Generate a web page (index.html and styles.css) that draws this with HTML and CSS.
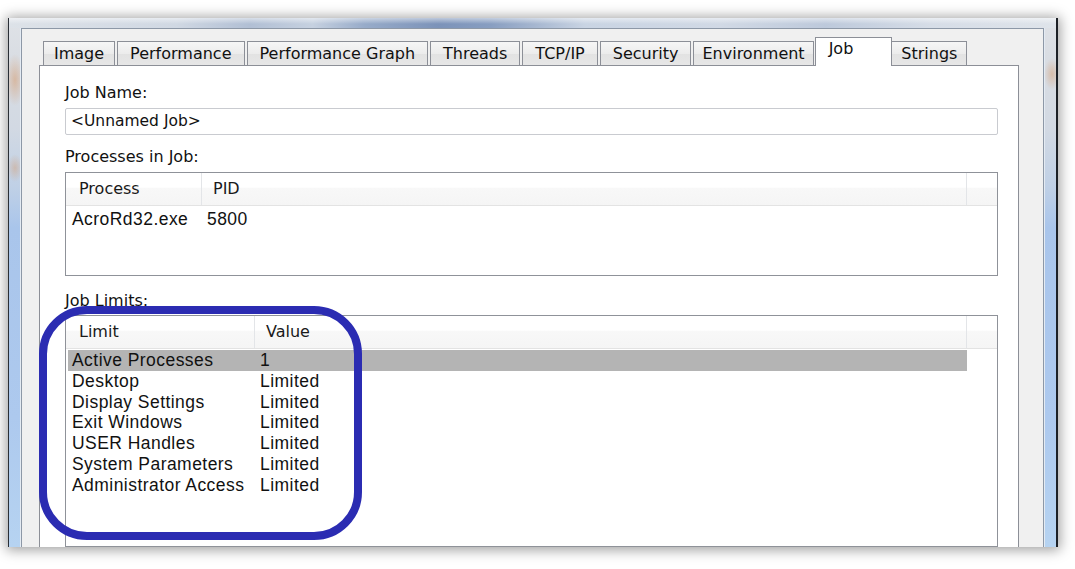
FILE: index.html
```html
<!DOCTYPE html>
<html>
<head>
<meta charset="utf-8">
<link rel="stylesheet" href="styles.css">
</head>
<body>
<div class="stage">
  <div class="window">
    <div class="topstrip"></div>
    <div class="dialog">
      <div class="tabs">
        <div class="tab">Image</div>
        <div class="tab">Performance</div>
        <div class="tab">Performance Graph</div>
        <div class="tab">Threads</div>
        <div class="tab">TCP/IP</div>
        <div class="tab">Security</div>
        <div class="tab tight">Environment</div>
        <div class="tab active">Job</div>
        <div class="tab">Strings</div>
      </div>
      <div class="panel">
        <div class="label first">Job Name:</div>
        <div class="textbox">&lt;Unnamed Job&gt;</div>
        <div class="label">Processes in Job:</div>
        <div class="listview procs">
          <div class="header">
            <div class="hcell c1">Process</div>
            <div class="hcell c2">PID</div>
            <div class="hcell filler"></div>
          </div>
          <div class="rows">
            <div class="row"><span class="cell c1">AcroRd32.exe</span><span class="cell c2">5800</span></div>
          </div>
        </div>
        <div class="label limits-label">Job Limits:</div>
        <div class="listview limits">
          <div class="header">
            <div class="hcell c1">Limit</div>
            <div class="hcell c2">Value</div>
            <div class="hcell filler"></div>
          </div>
          <div class="rows">
            <div class="row selected"><span class="cell c1">Active Processes</span><span class="cell c2">1</span></div>
            <div class="row"><span class="cell c1">Desktop</span><span class="cell c2">Limited</span></div>
            <div class="row"><span class="cell c1">Display Settings</span><span class="cell c2">Limited</span></div>
            <div class="row"><span class="cell c1">Exit Windows</span><span class="cell c2">Limited</span></div>
            <div class="row"><span class="cell c1">USER Handles</span><span class="cell c2">Limited</span></div>
            <div class="row"><span class="cell c1">System Parameters</span><span class="cell c2">Limited</span></div>
            <div class="row"><span class="cell c1">Administrator Access</span><span class="cell c2">Limited</span></div>
          </div>
        </div>
      </div>
    </div>
  </div>
  <div class="annot"></div>
</div>
</body>
</html>
```

FILE: styles.css
```css
* { box-sizing: border-box; }
html, body { margin: 0; padding: 0; background: #ffffff; }
.stage {
  position: relative;
  width: 1075px;
  height: 569px;
  overflow: hidden;
  padding: 18px 0 0 8px;
  background: #ffffff;
}
.window {
  width: 1050px;
  height: 529px;
  display: flex;
  flex-direction: column;
  padding: 0 12px;
  border-left: 1px solid #2a2f36;
  border-right: 2px solid #1c2026;
  background:
    radial-gradient(ellipse 10px 26px at 6px 62px, rgba(214,150,100,0.5), rgba(214,150,100,0) 100%),
    radial-gradient(ellipse 8px 14px at 6px 150px, rgba(214,150,100,0.4), rgba(214,150,100,0) 100%),
    radial-gradient(ellipse 8px 16px at 1043px 56px, rgba(214,150,100,0.45), rgba(214,150,100,0) 100%),
    linear-gradient(to bottom, #dfe2e7 0, #d9dde3 40px, #d2d9e3 110px, #bfd0e6 170px, #a9c5eb 210px, #adc9ee 400px, #b6d3f1 100%);
  box-shadow: 0 1px 12px 2px rgba(0, 0, 0, 0.38);
  overflow: hidden;
}
.topstrip {
  height: 10px;
  margin: 0 -12px;
  flex: none;
  background:
    linear-gradient(to bottom, rgba(255,255,255,0.5), rgba(255,255,255,0) 60%),
    linear-gradient(to right, #dde2e8 0%, #d0d8e3 16%, #b1bfd4 23%, #c6d1e0 29%, #97abc9 34%, #7c93b9 41%, #889ec1 46%, #a4b5cf 50%, #c9d4e3 55%, #d1d9e5 68%, #bdc9db 78%, #d6dde7 88%, #dfe4ea 100%);
}
.dialog {
  flex: 1;
  min-height: 0;
  display: flex;
  flex-direction: column;
  background: #f0f0f0;
  border: 1px solid #8d98a7;
  border-bottom: none;
  box-shadow: -1px 0 0 #e4ebf3, 1px 0 0 #e4ebf3;
  padding: 8px 24px 0 17px;
}
.tabs {
  display: flex;
  align-items: flex-end;
  padding-left: 4px;
  height: 28px;
  flex: none;
  position: relative;
  z-index: 2;
}
.tab {
  height: 24px;
  margin-right: 2px;
  padding: 0 12px;
  border: 1px solid #8c8f97;
  border-bottom: none;
  background: linear-gradient(to bottom, #f6f6f6 0, #ececec 50%, #e2e2e2 51%, #e7e7e7 100%);
  font-family: "DejaVu Sans", sans-serif;
  font-size: 16px;
  line-height: 23px;
  color: #111111;
  white-space: nowrap;
}
.tab:first-child { padding: 0 10px; }
.tab.tight { padding: 0 8px; }
.tab.active {
  height: 29px;
  margin: 0 0 -1px -1px;
  padding: 0 38px 0 13px;
  background: #ffffff;
  line-height: 22px;
}
.tab.active + .tab { margin-left: -1px; padding: 0 9px; }
.panel {
  flex: 1;
  min-height: 0;
  display: flex;
  flex-direction: column;
  background: #ffffff;
  border: 1px solid #8c8f97;
  border-bottom: none;
  padding: 0 20px 0 25px;
}
.label {
  font-family: "DejaVu Sans", sans-serif;
  font-size: 16px;
  line-height: 20px;
  height: 20px;
  color: #111111;
  margin-top: 12px;
  flex: none;
}
.label.first { margin-top: 17px; }
.label.limits-label { margin-top: 15px; }
.textbox {
  margin-top: 5px;
  height: 27px;
  flex: none;
  border: 1px solid #c9cbd0;
  border-radius: 2px;
  padding-left: 5px;
  font-family: "DejaVu Sans", sans-serif;
  font-size: 15.5px;
  line-height: 25px;
  color: #111111;
}
.listview {
  margin-top: 5px;
  flex: none;
  border: 1px solid #8f9299;
  background: #ffffff;
  overflow: hidden;
}
.listview.procs { height: 104px; }
.listview.limits { margin-top: 4px; flex: 1; min-height: 0; }
.header {
  display: flex;
  height: 33px;
  border-bottom: 1px solid #e3e3e3;
  background: linear-gradient(to bottom, #ffffff 0, #ffffff 45%, #f8f8f8 46%, #f5f5f5 100%);
}
.hcell {
  font-family: "DejaVu Sans", sans-serif;
  font-size: 16px;
  line-height: 32px;
  color: #1a1a1a;
  border-right: 1px solid #e3e5e8;
  white-space: nowrap;
}
.procs .hcell.c1 { width: 136px; padding-left: 13px; }
.limits .hcell.c1 { width: 189px; padding-left: 13px; }
.hcell.c2 { flex: 1; padding-left: 11px; }
.hcell.filler { width: 30px; border-right: none; }
.rows { padding: 1px 30px 0 2px; }
.procs .rows { padding-top: 3px; }
.row {
  display: flex;
  height: 20.8px;
  font-family: "Liberation Sans", Arial, sans-serif;
  font-size: 17.5px;
  letter-spacing: 0.45px;
  line-height: 20.8px;
  color: #111111;
  white-space: nowrap;
}
.row.selected { background: #b4b4b4; }
.cell.c1 { padding-left: 4px; }
.procs .cell.c1 { width: 135px; }
.limits .cell.c1 { width: 188px; }
.cell.c2 { padding-left: 4px; }
.annot {
  position: absolute;
  left: 39px;
  top: 306px;
  width: 323px;
  height: 234px;
  border: 8px solid #2b2cb2;
  border-radius: 48px;
}
```
